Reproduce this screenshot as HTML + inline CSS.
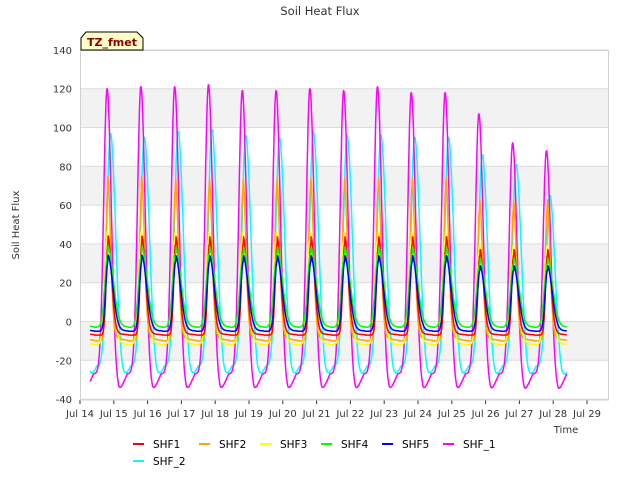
<!DOCTYPE html><html><head><style>body{margin:0;background:#fff}svg{display:block;font-family:"DejaVu Sans","Liberation Sans",sans-serif}</style></head><body>
<svg id="s" width="640" height="480" xmlns="http://www.w3.org/2000/svg">
<rect width="640" height="480" fill="#fff"/>
<g id="bands"></g>
<g id="grid" stroke="#dcdcdc" stroke-width="1"></g>
<rect x="80.5" y="50.5" width="528" height="349.5" fill="none" stroke="#d0d0d0"/>
<g id="lines" fill="none" stroke-width="1.5" stroke-linejoin="round"></g>
<g id="ticks" font-size="10" fill="#333"></g>
<text x="320" y="15" font-size="11.5" text-anchor="middle" fill="#333">Soil Heat Flux</text>
<text x="566" y="433" font-size="10" text-anchor="middle" fill="#333">Time</text>
<text transform="translate(19,225) rotate(-90)" font-size="10" text-anchor="middle" fill="#333">Soil Heat Flux</text>
<path d="M81,50 L81,38 L86,32 L137,32 L143,38 L143,50 Z" fill="#ffffc8" stroke="#000" stroke-width="1"/>
<text x="112" y="46" font-size="11" font-weight="bold" text-anchor="middle" fill="#8b0000">TZ_fmet</text>
<g font-size="10.5" fill="#000">
<rect x="133" y="443" width="11" height="2" fill="#f00"/><text x="153" y="448">SHF1</text>
<rect x="199" y="443" width="11" height="2" fill="#ffa500"/><text x="219" y="448">SHF2</text>
<rect x="260" y="443" width="11" height="2" fill="#ff0"/><text x="280" y="448">SHF3</text>
<rect x="321" y="443" width="11" height="2" fill="#0f0"/><text x="341" y="448">SHF4</text>
<rect x="382" y="443" width="11" height="2" fill="#00f"/><text x="402" y="448">SHF5</text>
<rect x="443" y="443" width="11" height="2" fill="#f0f"/><text x="463" y="448">SHF_1</text>
<rect x="133" y="460" width="11" height="2" fill="#0ff"/><text x="153" y="465">SHF_2</text>
</g>
</svg>
<script>
var NS="http://www.w3.org/2000/svg";
function Y(v){return 321.5-v*1.94;}
function X(d){return 80+d*33.8;}
function el(p,t,a){var e=document.createElementNS(NS,t);for(var k in a)e.setAttribute(k,a[k]);document.getElementById(p).appendChild(e);return e;}
[[100,120],[60,80],[20,40],[-20,0]].forEach(function(b){el("bands","rect",{x:80,y:Y(b[1]),width:528,height:Y(b[0])-Y(b[1]),fill:"#f2f2f2"});});
for(var v=-40;v<=140;v+=20){el("grid","line",{x1:80,x2:608,y1:Y(v),y2:Y(v)});var t=el("ticks","text",{x:72,y:Y(v)+4,"text-anchor":"end"});t.textContent=v;}
for(var d=0;d<=15;d++){var t=el("ticks","text",{x:X(d),y:417,"text-anchor":"middle"});t.textContent="Jul "+(14+d);el("grid","line",{x1:X(d),x2:X(d),y1:400,y2:404,stroke:"#333"});}
var mag=[120,121,121,122,119,119,120,119,121,118,118,107,92,88];
var cy=[97,95,98,99,96,95,98,96,96,95,95,86,81,65];
function pkf(arr,base,i){return arr?arr[i]:base*(i>=11?0.85:1);}
var series=[
 {c:"#0ff",pk:cy,mn:-32,off:0.1,wb:0.15,wa:0.22,rec:9,big:1},
 {c:"#f0f",pk:mag,mn:-37,off:0,wb:0.14,wa:0.18,rec:10,big:1},
 {c:"#ffa500",base:68,mn:-10,off:0.02,wb:0.08,wa:0.12},
 {c:"#ff0",base:42,mn:-12,off:0.0,wb:0.11,wa:0.2},
 {c:"#f00",base:40,mn:-7,off:0.03,wb:0.08,wa:0.15},
 {c:"#0f0",base:35,mn:-3,off:0.03,wb:0.13,wa:0.22},
 {c:"#00f",base:31,mn:-5,off:0.03,wb:0.1,wa:0.2}
];
series.forEach(function(s){
 var d="";
 for(var t=0.3;t<=14.4;t+=0.01){
  var p=t-0.8-s.off; var n=Math.round(p); p=p-n;
  if(p<-0.4)p+=1;
  var pk=pkf(s.pk,s.base,Math.min(13,Math.max(0,Math.round(t-0.8-s.off))));
  var w=p<0?s.wb:s.wa;
  var g=Math.exp(-(p*p)/(w*w));
  var v;
  if(s.big){
   var rec=0;
   if(p>0.35) rec=Math.min(1,(p-0.35)/0.25)*s.rec; else if(p<0) rec=s.rec;
   var low=s.mn+rec;
   v=low+(pk-low)*g;
  } else {
   var tail=p>0?(pk*0.1)*Math.exp(-p/0.2):0;
   v=s.mn+(pk-s.mn)*g+tail;
  }
  d+=(d?"L":"M")+X(t).toFixed(1)+","+Y(v).toFixed(1);
 }
 el("lines","path",{d:d,stroke:s.c});
});
</script>
</body></html>
